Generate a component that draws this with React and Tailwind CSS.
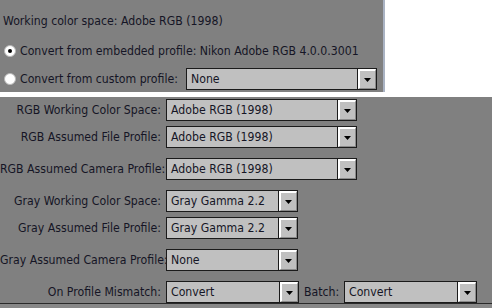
import React from 'react';

const Arrow = () => (
  <svg width="7" height="4" viewBox="0 0 7 4">
    <path d="M0 0h7L3.5 4z" fill="#000" />
  </svg>
);

const Select = ({ value, width }) => (
  <div
    className="flex h-[22px] border border-[#1b1b1b] bg-[#c0c0c0] shrink-0"
    style={{ width }}
  >
    <div className="flex-1 pl-[4px] leading-[20px] text-[#151525] truncate">{value}</div>
    <div className="w-[19px] border-l border-[#1b1b1b] flex">
      <div className="flex-1 border-t-2 border-l-2 border-white border-b border-r border-b-[#8a8a8a] border-r-[#8a8a8a] flex items-center justify-center bg-[#c0c0c0]">
        <Arrow />
      </div>
    </div>
  </div>
);

const Radio = ({ checked }) => (
  <div className="w-[12px] h-[12px] rounded-full bg-white border border-[#b8b8b8] flex items-center justify-center shrink-0">
    {checked && <div className="w-[4px] h-[4px] rounded-full bg-black" />}
  </div>
);

const rows = [
  { label: 'RGB Working Color Space:', value: 'Adobe RGB (1998)', w: 191, mt: 'mt-[2px]' },
  { label: 'RGB Assumed File Profile:', value: 'Adobe RGB (1998)', w: 191, mt: 'mt-[5px]' },
  { label: 'RGB Assumed Camera Profile:', value: 'Adobe RGB (1998)', w: 191, mt: 'mt-[10px]' },
  { label: 'Gray Working Color Space:', value: 'Gray Gamma 2.2', w: 132, mt: 'mt-[10px]' },
  { label: 'Gray Assumed File Profile:', value: 'Gray Gamma 2.2', w: 132, mt: 'mt-[5px]' },
  { label: 'Gray Assumed Camera Profile:', value: 'None', w: 132, mt: 'mt-[10px]' },
];

export default function App() {
  return (
    <div className="w-[492px] h-[308px] bg-white overflow-hidden text-[12.2px] text-[#151525] font-['DejaVu_Sans_Condensed',sans-serif]">
      {/* top panel */}
      <div className="w-[385px] h-[92px] bg-[#808080] border-r-2 border-[#aab3c3] pl-[4px] flex flex-col">
        <div className="mt-[13px] h-[16px] leading-[16px] -ml-[1px] whitespace-nowrap">Working color space: Adobe RGB (1998)</div>
        <div className="mt-[14px] h-[16px] flex items-center gap-[4px] whitespace-nowrap">
          <Radio checked />
          <span>Convert from embedded profile: Nikon Adobe RGB 4.0.0.3001</span>
        </div>
        <div className="mt-[9px] h-[22px] flex items-center whitespace-nowrap">
          <Radio />
          <span className="ml-[4px] w-[166px]">Convert from custom profile:</span>
          <Select value="None" width={191} />
        </div>
      </div>

      {/* bottom panel */}
      <div className="mt-[5px] h-[207px] bg-[#808080] border-b border-[#2a2a2a] flex flex-col">
        {rows.map((r) => (
          <div key={r.label} className={`${r.mt} flex items-center h-[22px]`}>
            <div className="w-[161px] text-right whitespace-nowrap">{r.label}</div>
            <div className="ml-[5px]">
              <Select value={r.value} width={r.w} />
            </div>
          </div>
        ))}
        <div className="mt-[10px] flex items-center h-[22px]">
          <div className="w-[161px] text-right whitespace-nowrap">On Profile Mismatch:</div>
          <div className="ml-[5px]">
            <Select value="Convert" width={133} />
          </div>
          <span className="ml-[5px] w-[40px]">Batch:</span>
          <Select value="Convert" width={133} />
        </div>
      </div>
      <div className="h-[4px] bg-[#888888]" />
    </div>
  );
}
